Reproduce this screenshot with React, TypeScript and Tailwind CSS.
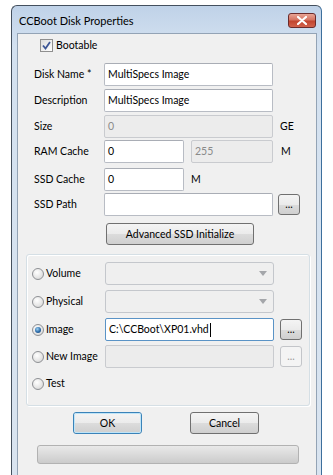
import React from "react"

const font = "font-['Lato','Liberation_Sans',sans-serif]"

function TextBox({ value, w, disabled, focused, caret }: { value?: string; w: string; disabled?: boolean; focused?: boolean; caret?: boolean }) {
  const border = focused
    ? "border-[#5a93c6]"
    : disabled
    ? "border-[#c9cbcf]"
    : "border-[#b8bcc4] border-t-[#a9adb5]"
  const bg = disabled ? "bg-[#ececec] text-[#8a8a8a]" : "bg-white text-black"
  return (
    <div className={`${w} h-[23px] rounded-[2px] border ${border} ${bg} flex items-center pl-[3px] text-[10.5px] leading-none whitespace-nowrap`}>
      <span>{value}</span>
      {caret && <span className="inline-block w-px h-[14px] bg-black ml-px" />}
    </div>
  )
}

function Combo() {
  return (
    <div className="w-[169px] h-[23px] rounded-[3px] border border-[#c4c7cc] bg-[#efefef] flex items-center justify-end pr-[6px]">
      <svg width="8" height="5" viewBox="0 0 8 5">
        <path d="M0 0 L8 0 L4 5 Z" fill="#a4a6aa" />
      </svg>
    </div>
  )
}

function Button({ label, w, h = "h-[22px]", isDefault, disabled }: { label: string; w: string; h?: string; isDefault?: boolean; disabled?: boolean }) {
  const border = isDefault ? "border-[#3a83b9]" : disabled ? "border-[#c3c5c9]" : "border-[#707070]"
  const bg = disabled
    ? "bg-[#f4f4f4] text-[#9a9a9a]"
    : "bg-[linear-gradient(#f4f4f4_0%,#ebebeb_50%,#dcdcdc_51%,#cfcfcf_100%)] text-black"
  return (
    <div className={`${w} ${h} rounded-[3px] border ${border} ${bg} flex items-center justify-center text-[10.5px] leading-none whitespace-nowrap`}>
      {isDefault ? (
        <div className="w-full h-full rounded-[2px] border border-[#bfe4f7] flex items-center justify-center">{label}</div>
      ) : (
        label
      )}
    </div>
  )
}

function Radio({ checked }: { checked?: boolean }) {
  return (
    <div className="w-[12px] h-[12px] shrink-0 rounded-full border border-[#8e9094] bg-[radial-gradient(circle_at_40%_35%,#ffffff_0%,#e4e4e4_60%,#cfcfcf_100%)] flex items-center justify-center">
      {checked && (
        <div className="w-[6px] h-[6px] rounded-full bg-[radial-gradient(circle_at_40%_35%,#9fd3f4_0%,#2b6aa8_55%,#173f6e_100%)]" />
      )}
    </div>
  )
}

function Row({ label, children, mt }: { label: string; children: React.ReactNode; mt: string }) {
  return (
    <div className={`flex items-center ${mt}`}>
      <div className="w-[70px] pl-[16px] text-[10.5px] leading-none box-content whitespace-nowrap">{label}</div>
      {children}
    </div>
  )
}

function RadioRow({ label, children, mt, checked }: { label: string; children?: React.ReactNode; mt: string; checked?: boolean }) {
  return (
    <div className={`flex items-center h-[23px] ${mt}`}>
      <div className="w-[78px] pl-[5px] flex items-center gap-[2px] text-[10.5px] leading-none whitespace-nowrap">
        <Radio checked={checked} />
        <span>{label}</span>
      </div>
      {children}
    </div>
  )
}

export default function App() {
  return (
    <div className={`w-[333px] h-[475px] bg-white overflow-hidden ${font}`}>
      <div className="ml-[11px] mt-[5px] w-[311px] h-[470px] rounded-t-[6px] border border-[#44505e] border-b-0 border-r-[#3d6f9c] bg-[linear-gradient(#bfd2e8,#d3e1f0_40px,#d9e4f0)] flex flex-col">
        {/* Title bar */}
        <div className="h-[27px] flex items-center justify-between pl-[7px] pr-[5px]">
          <span className="text-[11px] text-black leading-none mt-[2px]">CCBoot Disk Properties</span>
          <div className="w-[28px] h-[15px] rounded-[3px] border border-[#6b2b2b] bg-[linear-gradient(#e8a495_0%,#d57462_45%,#c2452f_55%,#d2624c_100%)] flex items-center justify-center mt-[2px]">
            <svg width="10" height="9" viewBox="0 0 10 9">
              <path d="M1 1 L9 8 M9 1 L1 8" stroke="#ffffff" strokeWidth="2.2" strokeLinecap="round" />
            </svg>
          </div>
        </div>

        {/* Body */}
        <div className="flex-1 ml-[5px] mr-[4px] bg-[#f0f0f0] border border-[#93a3b5] border-b-0 text-black">
          {/* Bootable */}
          <div className="flex items-center gap-[3px] ml-[22px] mt-[5px] text-[10.5px] leading-none">
            <div className="w-[13px] h-[13px] border border-[#8f8f8f] bg-[linear-gradient(135deg,#dcdcdc,#ffffff)] flex items-center justify-center">
              <svg width="9" height="9" viewBox="0 0 9 9">
                <path d="M1 4.5 L3.5 7.5 L8 1" stroke="#3c5595" strokeWidth="1.8" fill="none" />
              </svg>
            </div>
            <span>Bootable</span>
          </div>

          <Row label="Disk Name *" mt="mt-[11px]">
            <TextBox value="MultiSpecs Image" w="w-[169px]" />
          </Row>
          <Row label="Description" mt="mt-[3px]">
            <TextBox value="MultiSpecs Image" w="w-[169px]" />
          </Row>
          <Row label="Size" mt="mt-[3px]">
            <TextBox value="0" w="w-[169px]" disabled />
            <span className="ml-[7px] text-[10.5px] leading-none">GE</span>
          </Row>
          <Row label="RAM Cache" mt="mt-[2px]">
            <TextBox value="0" w="w-[80px]" />
            <div className="ml-[7px]">
              <TextBox value="255" w="w-[82px]" disabled />
            </div>
            <span className="ml-[8px] text-[10.5px] leading-none">M</span>
          </Row>
          <Row label="SSD Cache" mt="mt-[5px]">
            <TextBox value="0" w="w-[80px]" />
            <span className="ml-[7px] text-[10.5px] leading-none">M</span>
          </Row>
          <Row label="SSD Path" mt="mt-[2px]">
            <TextBox w="w-[169px]" />
            <div className="ml-[5px]">
              <Button label="..." w="w-[22px]" h="h-[21px]" />
            </div>
          </Row>

          <div className="ml-[88px] mt-[7px]">
            <Button label="Advanced SSD Initialize" w="w-[148px]" />
          </div>

          {/* Group box */}
          <div className="ml-[8px] mt-[9px] w-[284px] h-[152px] rounded-[3px] border border-[#d5dfe5] shadow-[inset_1px_1px_0_#ffffff,1px_1px_0_#ffffff] pt-[7px]">
            <RadioRow label="Volume" mt="mt-0">
              <Combo />
            </RadioRow>
            <RadioRow label="Physical" mt="mt-[5px]">
              <Combo />
            </RadioRow>
            <RadioRow label="Image" mt="mt-[5px]" checked>
              <TextBox value="C:\CCBoot\XP01.vhd" w="w-[169px]" focused caret />
              <div className="ml-[6px]">
                <Button label="..." w="w-[22px]" h="h-[21px]" />
              </div>
            </RadioRow>
            <RadioRow label="New Image" mt="mt-[4px]">
              <TextBox w="w-[169px]" disabled />
              <div className="ml-[6px]">
                <Button label="..." w="w-[22px]" h="h-[21px]" disabled />
              </div>
            </RadioRow>
            <RadioRow label="Test" mt="mt-[4px]" />
          </div>

          {/* OK / Cancel */}
          <div className="flex mt-[6px] ml-[55px] gap-[48px]">
            <Button label="OK" w="w-[69px]" isDefault />
            <Button label="Cancel" w="w-[69px]" />
          </div>

          {/* Progress bar */}
          <div className="ml-[19px] mt-[11px] w-[262px] h-[19px] rounded-[3px] border border-[#b2b2b2] bg-[linear-gradient(#e9e9e9,#dadada_50%,#cbcbcb)]" />
        </div>
      </div>
    </div>
  )
}
